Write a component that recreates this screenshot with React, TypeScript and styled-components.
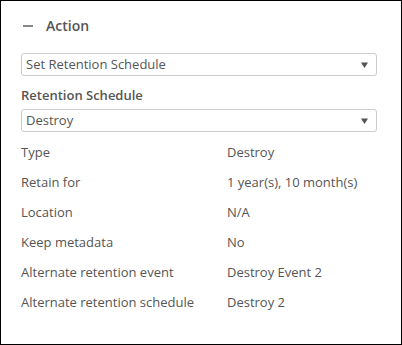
import React from 'react';
import styled, { createGlobalStyle } from 'styled-components';

const GlobalStyle = createGlobalStyle`
  html, body {
    margin: 0;
    padding: 0;
    background: #fff;
  }
  body {
    font-family: 'Open Sans', 'Liberation Sans', sans-serif;
    color: #555;
  }
`;

const Panel = styled.div`
  box-sizing: border-box;
  width: 402px;
  height: 345px;
  border: 1px solid #000;
  padding: 13px 24px 0 20px;
  background: #fff;
`;

const Header = styled.div`
  display: flex;
  align-items: center;
  gap: 13px;
  height: 23px;
  padding-left: 2px;
  font-size: 14px;
  font-weight: 600;
  line-height: 23px;
  color: #555;
`;

const Collapse = styled.span`
  display: block;
  width: 10px;
  height: 2px;
  background: #888;
`;

const SelectBox = styled.div<{ $mt: number }>`
  box-sizing: border-box;
  display: flex;
  align-items: center;
  justify-content: space-between;
  height: 23px;
  margin-top: ${(p) => p.$mt}px;
  padding: 0 8px 0 4px;
  border: 1px solid #ccc;
  border-radius: 3px;
  font-size: 13px;
  line-height: 21px;
  color: #555;
`;

const Label = styled.div`
  margin-top: 9px;
  font-size: 13px;
  font-weight: 600;
  line-height: 20px;
  color: #555;
`;

const Details = styled.div`
  display: grid;
  grid-template-columns: 206px 1fr;
  margin-top: 5px;
  font-size: 13px;
  line-height: 30px;
  color: #555;
`;

const Arrow = () => (
  <svg width="7" height="6" viewBox="0 0 7 6">
    <path d="M0 0.5 H7 L3.5 6 Z" fill="#555" />
  </svg>
);

const Select = ({ value, mt }: { value: string; mt: number }) => (
  <SelectBox $mt={mt}>
    <span>{value}</span>
    <Arrow />
  </SelectBox>
);

const rows: [string, string][] = [
  ['Type', 'Destroy'],
  ['Retain for', '1 year(s), 10 month(s)'],
  ['Location', 'N/A'],
  ['Keep metadata', 'No'],
  ['Alternate retention event', 'Destroy Event 2'],
  ['Alternate retention schedule', 'Destroy 2'],
];

export default function App() {
  return (
    <>
      <GlobalStyle />
      <Panel>
        <Header>
          <Collapse />
          <span>Action</span>
        </Header>
        <Select value="Set Retention Schedule" mt={16} />
        <Label>Retention Schedule</Label>
        <Select value="Destroy" mt={4} />
        <Details>
          {rows.map(([k, v]) => (
            <React.Fragment key={k}>
              <span>{k}</span>
              <span>{v}</span>
            </React.Fragment>
          ))}
        </Details>
      </Panel>
    </>
  );
}
